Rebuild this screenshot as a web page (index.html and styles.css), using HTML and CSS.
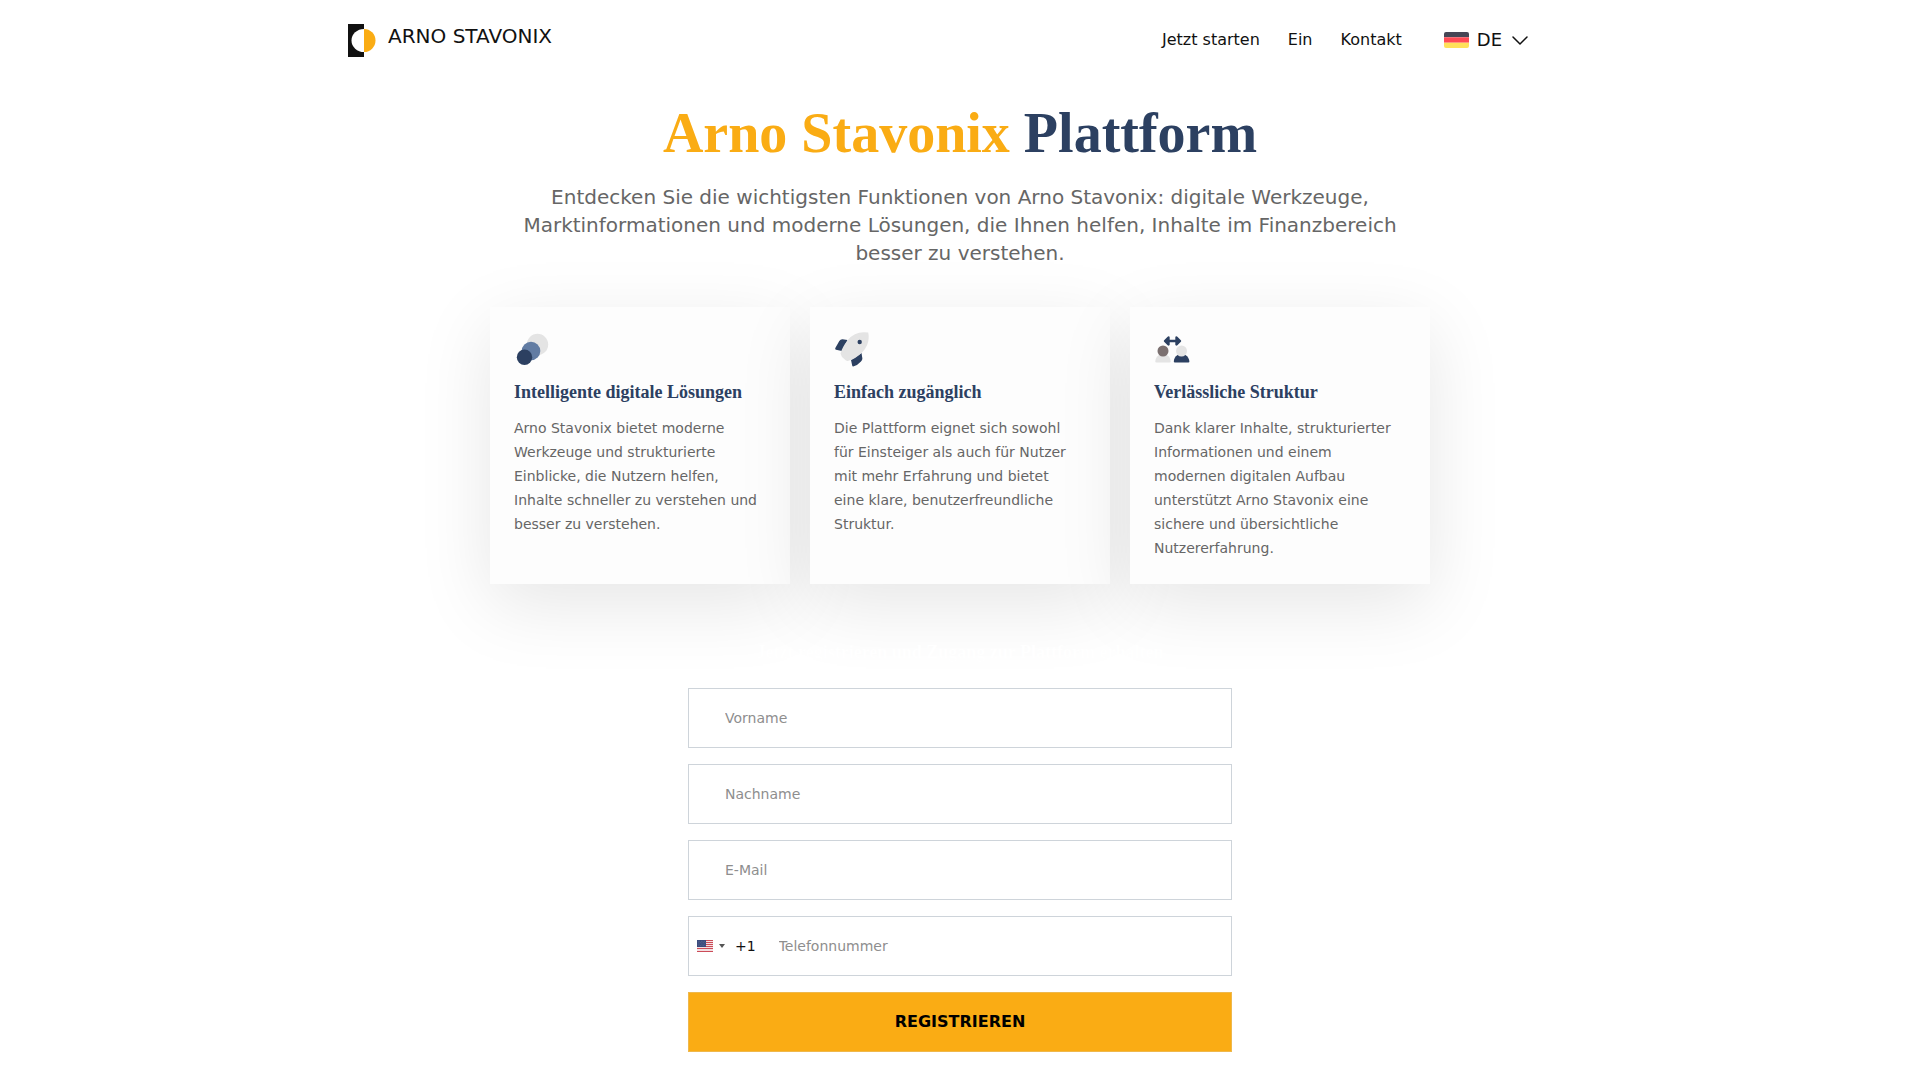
FILE: index.html
```html
<!DOCTYPE html>
<html lang="de">
<head>
<meta charset="utf-8">
<meta name="viewport" content="width=device-width, initial-scale=1">
<title>Arno Stavonix</title>
<link rel="stylesheet" href="styles.css">
</head>
<body>
<header class="header">
  <a class="brand" href="#">
    <svg class="brand-mark" viewBox="0 0 28 33" aria-hidden="true">
      <path fill="#111" d="M0 0h16v33H0z"/>
      <path fill="#fff" d="M16 5a12.500 11.500 0 0 0 0 23z"/>
      <path fill="#faac14" d="M16 5a11.500 11.500 0 0 1 0 23z"/>
    </svg>
    <span class="brand-name">ARNO STAVONIX</span>
  </a>
  <nav class="nav">
    <a href="#signup">Jetzt starten</a>
    <a href="#about">Ein</a>
    <a href="#contact">Kontakt</a>
  </nav>
  <button class="lang" type="button">
    <svg class="lang-flag" viewBox="0 0 25 16" aria-hidden="true">
      <path fill="#464655" d="M2 0h21a2 2 0 0 1 2 2v3.300H0V2a2 2 0 0 1 2-2z"/>
      <path fill="#ff4b55" d="M0 5.300h25v5.400H0z"/>
      <path fill="#ffe15a" d="M0 10.700h25V14a2 2 0 0 1-2 2H2a2 2 0 0 1-2-2z"/>
    </svg>
    <span>DE</span>
    <svg class="lang-arrow" viewBox="0 0 16 16" aria-hidden="true">
      <path d="M1 5l7 7 7-7" fill="none" stroke="#111" stroke-width="1.500" stroke-linecap="round" stroke-linejoin="round"/>
    </svg>
  </button>
</header>
<main class="main">
  <h1 class="title"><span class="title-accent">Arno Stavonix</span> Plattform</h1>
  <p class="lead">Entdecken Sie die wichtigsten Funktionen von Arno Stavonix: digitale Werkzeuge, Marktinformationen und moderne Lösungen, die Ihnen helfen, Inhalte im Finanzbereich besser zu verstehen.</p>
  <section class="cards" id="about">
    <article class="card">
      <svg class="card-icon" viewBox="0 0 36 36" aria-hidden="true">
        <circle cx="23.500" cy="13.500" r="10.700" fill="#e4e4e4"/>
        <circle cx="17" cy="20" r="9.300" fill="#627ca3"/>
        <circle cx="10.500" cy="26.300" r="7.700" fill="#2c4061"/>
      </svg>
      <h2 class="card-title">Intelligente digitale Lösungen</h2>
      <p class="card-text">Arno Stavonix bietet moderne Werkzeuge und strukturierte Einblicke, die Nutzern helfen, Inhalte schneller zu verstehen und besser zu verstehen.</p>
    </article>
    <article class="card">
      <svg class="card-icon" viewBox="0 0 36 36" aria-hidden="true">
        <path fill="#2c4061" d="M13.500 9 8.500 8.300Q6.500 8.200 5.300 10L1.200 17.300Q1 18.600 2 18.800L8 20zM27.500 22l.9 5.500Q28.400 29 27 30.500 24 34 19.200 35.500q-1 0-1-1L17 29z"/>
        <path fill="#e4e4e4" d="M34.200 1.600Q21.500-.5 13.800 9 8 16.500 6.500 22.500L8 26l4 3.500q1 .7 2.500.2 7.500-2 14-8.700Q36.500 12.500 34.200 1.600z"/>
        <circle cx="25.700" cy="11" r="2.200" fill="#2c4061"/>
      </svg>
      <h2 class="card-title">Einfach zugänglich</h2>
      <p class="card-text">Die Plattform eignet sich sowohl für Einsteiger als auch für Nutzer mit mehr Erfahrung und bietet eine klare, benutzerfreundliche Struktur.</p>
    </article>
    <article class="card">
      <svg class="card-icon" viewBox="0 0 36 36" aria-hidden="true">
        <path d="M14.500 6.500 11 10l3.500 3.500zM22.500 6.500 26 10l-3.500 3.500zM12 10h13" fill="#2c4061" stroke="#2c4061" stroke-width="2.400" stroke-linecap="round" stroke-linejoin="round"/>
        <path fill="#e4e4e4" d="M1.300 30.500Q1.500 26 5 24h8q3.500 2 3.700 6.500 0 1-1 1H2.300q-1 0-1-1z"/>
        <path fill="#2c4061" d="M19.800 30.500q.2-4.500 3.700-6.500h8q3.500 2 3.900 6.500 0 1-1 1H20.800q-1 0-1-1z"/>
        <circle cx="9" cy="20" r="5.500" fill="#7b7070"/>
        <circle cx="27.500" cy="20" r="5.500" fill="#e4e4e4"/>
      </svg>
      <h2 class="card-title">Verlässliche Struktur</h2>
      <p class="card-text">Dank klarer Inhalte, strukturierter Informationen und einem modernen digitalen Aufbau unterstützt Arno Stavonix eine sichere und übersichtliche Nutzererfahrung.</p>
    </article>
  </section>
  <form class="form" id="signup">
    <h2 class="form-title">Jetzt registrieren und Zugang zur Plattform erhalten</h2>
    <input class="field" type="text" placeholder="Vorname" aria-label="Vorname">
    <input class="field" type="text" placeholder="Nachname" aria-label="Nachname">
    <input class="field" type="email" placeholder="E-Mail" aria-label="E-Mail">
    <div class="field phone">
      <button class="country" type="button" aria-label="+1">
        <svg class="country-flag" viewBox="0 0 16 12" aria-hidden="true">
          <path fill="#f3dfe2" d="M0 0h16v12H0z"/>
          <path stroke="#cc4c58" d="M0 .5h16M0 2.500h16M0 4.500h16M0 6.500h16M0 8.500h16M0 11.500h16"/>
          <path fill="#3a4a7c" d="M0 0h9v7H0z"/>
          <path stroke="#7886ab" stroke-width=".5" stroke-dasharray=".7 .9" d="M.8 1.300H8.500M1.500 2.700H8.500M.8 4.100H8.500M1.500 5.400H8.500"/>
        </svg>
        <svg class="country-arrow" viewBox="0 0 6 4" aria-hidden="true"><path fill="#555" d="M0 0h6L3 4z"/></svg>
        <span>+1</span>
      </button>
      <input class="phone-input" type="tel" placeholder="Telefonnummer" aria-label="Telefonnummer">
    </div>
    <button class="submit" type="submit">REGISTRIEREN</button>
  </form>
</main>
</body>
</html>
```
FILE: styles.css
```css
* {
  box-sizing: border-box;
}

body {
  margin: 0;
  background: #fff;
  color: #111;
  font-family: "DejaVu Sans", sans-serif;
  font-size: 16px;
}

h1,
h2,
p {
  margin: 0;
}

a {
  color: inherit;
  text-decoration: none;
}

button,
input {
  font: inherit;
  color: inherit;
}

svg {
  display: block;
  flex: none;
}

.header {
  display: flex;
  align-items: center;
  max-width: 1224px;
  height: 80px;
  margin: 0 auto;
  padding-right: 44px;
}

.brand {
  display: flex;
  gap: 12px;
  margin-right: auto;
}

.brand-mark {
  width: 28px;
  height: 33px;
}

.brand-name {
  font-size: 20px;
  line-height: 24px;
}

.nav {
  display: flex;
  gap: 28px;
  line-height: 20px;
}

.lang {
  display: flex;
  align-items: center;
  gap: 8px;
  margin-left: 42px;
  padding: 0;
  border: 0;
  background: none;
  font-size: 18px;
  line-height: 20px;
}

.lang-flag {
  width: 25px;
  height: 16px;
}

.lang-arrow {
  width: 16px;
  height: 16px;
  margin-left: 2px;
}

.main {
  padding: 20px 16px 28px;
}

.title {
  color: #2c4061;
  font-family: "Liberation Serif", serif;
  font-size: 56px;
  line-height: 66px;
  text-align: center;
}

.title-accent {
  color: #faac14;
}

.lead {
  max-width: 940px;
  margin: 17px auto 40px;
  color: #666;
  font-size: 20px;
  line-height: 28px;
  text-align: center;
}

.cards {
  display: grid;
  grid-template-columns: repeat(auto-fit, minmax(280px, 1fr));
  gap: 20px;
  max-width: 940px;
  margin: 0 auto;
}

.card {
  padding: 24px 30px 24px 24px;
  background: #fdfdfd;
  box-shadow: 0 20px 70px rgba(0, 0, 0, 0.1);
}

.card-icon {
  width: 36px;
  height: 36px;
}

.card-title {
  margin: 13px 0 12px;
  color: #2c4061;
  font-family: "Liberation Serif", serif;
  font-size: 18px;
  line-height: 24px;
}

.card-text {
  color: #666;
  font-size: 14px;
  line-height: 24px;
}

.form {
  position: relative;
  display: flex;
  flex-direction: column;
  gap: 16px;
  max-width: 544px;
  margin: 56px auto 0;
}

.form-title {
  margin-bottom: 8px;
  color: #fff;
  font-family: "Liberation Serif", serif;
  font-size: 18px;
  line-height: 24px;
  text-align: center;
}

.field {
  width: 100%;
  height: 60px;
  padding: 0 36px;
  border: 1px solid #ced4da;
  border-radius: 0;
  background: #fff;
  font-size: 14px;
}

.field::placeholder,
.phone-input::placeholder {
  color: #8e8e8e;
  opacity: 1;
}

.phone {
  display: flex;
  padding: 0;
}

.country {
  display: flex;
  align-items: center;
  padding: 0 8px;
  border: 0;
  background: none;
}

.country-flag {
  width: 16px;
  height: 12px;
}

.country-arrow {
  width: 6px;
  height: 4px;
  margin: 0 10px 0 6px;
}

.phone-input {
  flex: 1;
  min-width: 0;
  padding: 0 15px;
  border: 0;
  background: none;
}

.submit {
  height: 60px;
  padding: 0 0 2px;
  border: 1px solid #efb84c;
  background: #faac14;
  color: #000;
  font-weight: 700;
}
```
